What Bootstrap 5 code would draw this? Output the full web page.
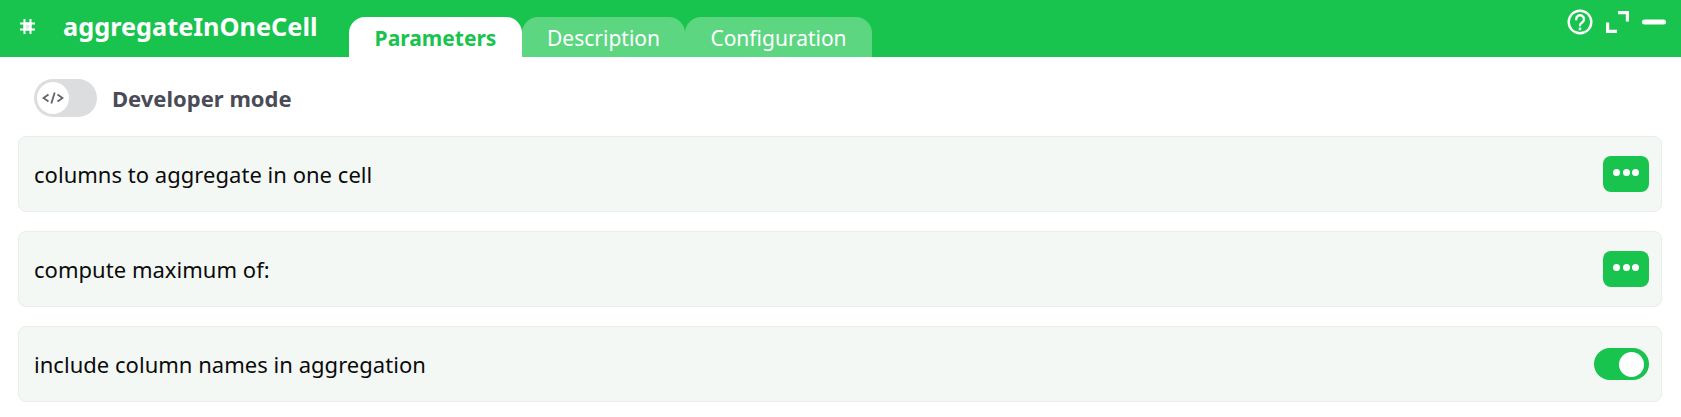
<!DOCTYPE html>
<html lang="en">
<head>
    <meta charset="UTF-8">
    <title>aggregateInOneCell</title>
    <link href="https://cdn.jsdelivr.net/npm/bootstrap@5.3.0/dist/css/bootstrap.min.css" rel="stylesheet">
    <style>
        body {
            font-family: "Noto Sans", sans-serif;
            background: #fff;
            overflow: hidden;
        }

        .brick-head {
            height: 57px;
            background: #18c34e;
            color: #fff;
            padding-left: 20px;
        }

        .brick-icon {
            width: 15px;
            height: 15px;
            margin-top: -4px;
        }

        .brick-title {
            font-size: 25.3px;
            font-weight: 700;
            margin-left: 28px;
            width: 286px;
            margin-top: -5px;
            line-height: 34px;
        }

        .tab-strip {
            align-self: flex-end;
        }

        .tab-item {
            height: 40px;
            font-size: 21px;
            line-height: 42px;
            text-align: center;
            color: #fff;
            background: #5cd681;
            border-radius: 16px 16px 0 0;
        }

        .tab-item.active-tab {
            width: 173px;
            background: #fff;
            color: #18c34e;
            font-weight: 700;
        }

        .tab-desc { width: 163px; }
        .tab-conf { width: 187px; }

        .head-tools {
            position: absolute;
            top: 9px;
            right: 15px;
            gap: 13px;
        }

        .dev-row {
            padding: 22px 0 0 34px;
            height: 79px;
        }

        .dev-toggle {
            width: 63px;
            height: 38px;
            border-radius: 19px;
            background: #dcddde;
            padding: 3px;
        }

        .dev-knob {
            width: 32px;
            height: 32px;
            border-radius: 50%;
            background: #fff;
        }

        .dev-label {
            font-size: 22px;
            font-weight: 700;
            color: #4a4b57;
            margin-left: 15px;
            margin-top: 3px;
        }

        .param-list {
            padding: 0 19px 0 18px;
            gap: 19px;
        }

        .param-row {
            height: 76px;
            background: #f4f8f5;
            border: 1px solid #e9eeea;
            border-radius: 8px;
            padding: 0 12px 0 15px;
            font-size: 22px;
            letter-spacing: .03px;
            color: #0b0b0b;
        }

        .dots-btn {
            width: 46px;
            height: 36px;
            background: #18c34e;
            border-radius: 8px;
            gap: 2.7px;
            padding-bottom: 4px;
        }

        .dots-btn span {
            width: 7px;
            height: 7px;
            border-radius: 50%;
            background: #fff;
        }

        .param-toggle {
            width: 55px;
            height: 32px;
            border-radius: 16px;
            background: #18c34e;
            padding-right: 5px;
        }

        .param-knob {
            width: 25px;
            height: 25px;
            border-radius: 50%;
            background: #fff;
        }
    </style>
</head>
<body>
    <div class="brick-head d-flex align-items-center position-relative">
        <svg class="brick-icon" viewBox="0 0 15 15" fill="none" stroke="#fff" stroke-width="2">
            <rect x="4.5" y="4.5" width="6" height="6" fill="#dfe9e3"/>
            <path d="M4.5 0v15M10.5 0v15M0 4.5h15M0 10.5h15"/>
        </svg>
        <div class="brick-title">aggregateInOneCell</div>
        <div class="tab-strip d-flex">
            <div class="tab-item active-tab">Parameters</div>
            <div class="tab-item tab-desc">Description</div>
            <div class="tab-item tab-conf">Configuration</div>
        </div>
        <div class="head-tools d-flex align-items-center">
            <svg width="26" height="26" viewBox="0 0 26 26" fill="none" stroke="#fff" stroke-width="2.4" stroke-linecap="round">
                <circle cx="13" cy="13" r="11.3"/>
                <path d="M9.2 10.2a3.9 3.9 0 1 1 6.2 3.1c-1.5 1-2.4 1.7-2.4 3"/>
                <circle cx="13" cy="20" r=".5" stroke-width="1.8"/>
            </svg>
            <svg width="23" height="22" viewBox="0 0 23 22" fill="none" stroke="#fff" stroke-width="3.2">
                <path d="M12 1.6h9.4v8.9M1.6 11.5v8.9h9.4"/>
            </svg>
            <svg width="24" height="6" viewBox="0 0 24 6"><rect width="24" height="5" y=".5" rx="2.5" fill="#fff"/></svg>
        </div>
    </div>

    <div class="dev-row d-flex align-items-start">
        <div class="dev-toggle">
            <div class="dev-knob d-flex align-items-center justify-content-center">
                <svg width="22" height="12" viewBox="0 0 22 12" fill="none" stroke="#62636b" stroke-width="1.8">
                    <path d="M6.5 2.5L1.5 6l5 3.5M15.5 2.5l5 3.5-5 3.5M12.7 .5L9.3 11.5"/>
                </svg>
            </div>
        </div>
        <div class="dev-label">Developer mode</div>
    </div>

    <div class="param-list d-flex flex-column">
        <div class="param-row d-flex align-items-center justify-content-between">
            <span>columns to aggregate in one cell</span>
            <div class="dots-btn d-flex align-items-center justify-content-center"><span></span><span></span><span></span></div>
        </div>
        <div class="param-row d-flex align-items-center justify-content-between">
            <span>compute maximum of:</span>
            <div class="dots-btn d-flex align-items-center justify-content-center"><span></span><span></span><span></span></div>
        </div>
        <div class="param-row d-flex align-items-center justify-content-between">
            <span>include column names in aggregation</span>
            <div class="param-toggle d-flex align-items-center justify-content-end"><div class="param-knob"></div></div>
        </div>
    </div>

    <script src="https://cdn.jsdelivr.net/npm/bootstrap@5.3.0/dist/js/bootstrap.bundle.min.js"></script>
</body>
</html>
